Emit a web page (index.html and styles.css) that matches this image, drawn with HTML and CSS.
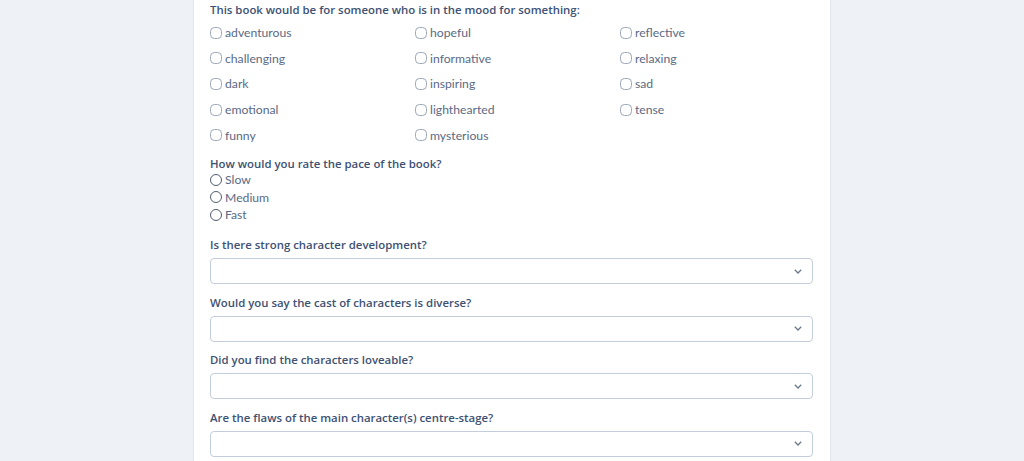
FILE: index.html
```html
<!DOCTYPE html>
<html lang="en">
<head>
<meta charset="utf-8">
<title>Book review</title>
<link rel="stylesheet" href="styles.css">
</head>
<body>
<main class="card">
  <section class="block">
    <h3 class="q">This book would be for someone who is in the mood for something:</h3>
    <div class="moods">
      <label class="opt"><span class="box"></span>adventurous</label>
      <label class="opt"><span class="box"></span>hopeful</label>
      <label class="opt"><span class="box"></span>reflective</label>
      <label class="opt"><span class="box"></span>challenging</label>
      <label class="opt"><span class="box"></span>informative</label>
      <label class="opt"><span class="box"></span>relaxing</label>
      <label class="opt"><span class="box"></span>dark</label>
      <label class="opt"><span class="box"></span>inspiring</label>
      <label class="opt"><span class="box"></span>sad</label>
      <label class="opt"><span class="box"></span>emotional</label>
      <label class="opt"><span class="box"></span>lighthearted</label>
      <label class="opt"><span class="box"></span>tense</label>
      <label class="opt"><span class="box"></span>funny</label>
      <label class="opt"><span class="box"></span>mysterious</label>
    </div>
  </section>
  <section class="block pace">
    <h3 class="q">How would you rate the pace of the book?</h3>
    <div class="radios">
      <label class="ropt"><span class="radio"></span>Slow</label>
      <label class="ropt"><span class="radio"></span>Medium</label>
      <label class="ropt"><span class="radio"></span>Fast</label>
    </div>
  </section>
  <section class="block sel">
    <h3 class="q">Is there strong character development?</h3>
    <div class="select"><svg class="chev" viewBox="0 0 8 5" width="8" height="5"><path d="M0.8 0.8 L4 4 L7.2 0.8" fill="none" stroke="#6b788c" stroke-width="1.3"/></svg></div>
  </section>
  <section class="block sel">
    <h3 class="q">Would you say the cast of characters is diverse?</h3>
    <div class="select"><svg class="chev" viewBox="0 0 8 5" width="8" height="5"><path d="M0.8 0.8 L4 4 L7.2 0.8" fill="none" stroke="#6b788c" stroke-width="1.3"/></svg></div>
  </section>
  <section class="block sel">
    <h3 class="q">Did you find the characters loveable?</h3>
    <div class="select"><svg class="chev" viewBox="0 0 8 5" width="8" height="5"><path d="M0.8 0.8 L4 4 L7.2 0.8" fill="none" stroke="#6b788c" stroke-width="1.3"/></svg></div>
  </section>
  <section class="block sel">
    <h3 class="q">Are the flaws of the main character(s) centre-stage?</h3>
    <div class="select"><svg class="chev" viewBox="0 0 8 5" width="8" height="5"><path d="M0.8 0.8 L4 4 L7.2 0.8" fill="none" stroke="#6b788c" stroke-width="1.3"/></svg></div>
  </section>
</main>
</body>
</html>
```
FILE: styles.css
```css
html, body {
  margin: 0;
  padding: 0;
  background: #eef1f6;
  height: 461px;
  overflow: hidden;
}
.card {
  box-sizing: border-box;
  width: 638px;
  margin: 0 auto;
  background: #ffffff;
  border-left: 1px solid #e4e8ee;
  border-right: 1px solid #e4e8ee;
  padding: 2px 17px 0 16px;
  min-height: 461px;
}
.q {
  margin: 0;
  font-family: "Open Sans", sans-serif;
  font-weight: 600;
  font-size: 11.4px;
  line-height: 16px;
  color: #3d5173;
}
.moods {
  display: grid;
  grid-template-columns: repeat(3, 205px);
  grid-auto-rows: 25.6px;
  margin-top: 2px;
}
.opt, .ropt {
  display: flex;
  align-items: center;
  font-family: "Lato", sans-serif;
  font-size: 12.2px;
  color: #5a6a85;
}
.box {
  box-sizing: border-box;
  width: 12px;
  height: 12px;
  border: 1px solid #9ba7b9;
  border-radius: 4.5px;
  margin-right: 3px;
  flex: none;
}
.pace {
  margin-top: 8px;
}
.ropt {
  height: 17.5px;
}
.radio {
  box-sizing: border-box;
  width: 12px;
  height: 12px;
  border: 1px solid #515c6c;
  border-radius: 50%;
  margin-right: 3px;
  flex: none;
}
.radios {
  margin-top: -1px;
}
.sel {
  margin-top: 14px;
}
.sel + .sel {
  margin-top: 10.5px;
}
.sel .q {
  margin-bottom: 5px;
}
.select {
  box-sizing: border-box;
  height: 26px;
  border: 1px solid #c3cddb;
  border-radius: 4px;
  display: flex;
  align-items: center;
  justify-content: flex-end;
  padding-right: 10px;
}
.chev {
  display: block;
}
```
